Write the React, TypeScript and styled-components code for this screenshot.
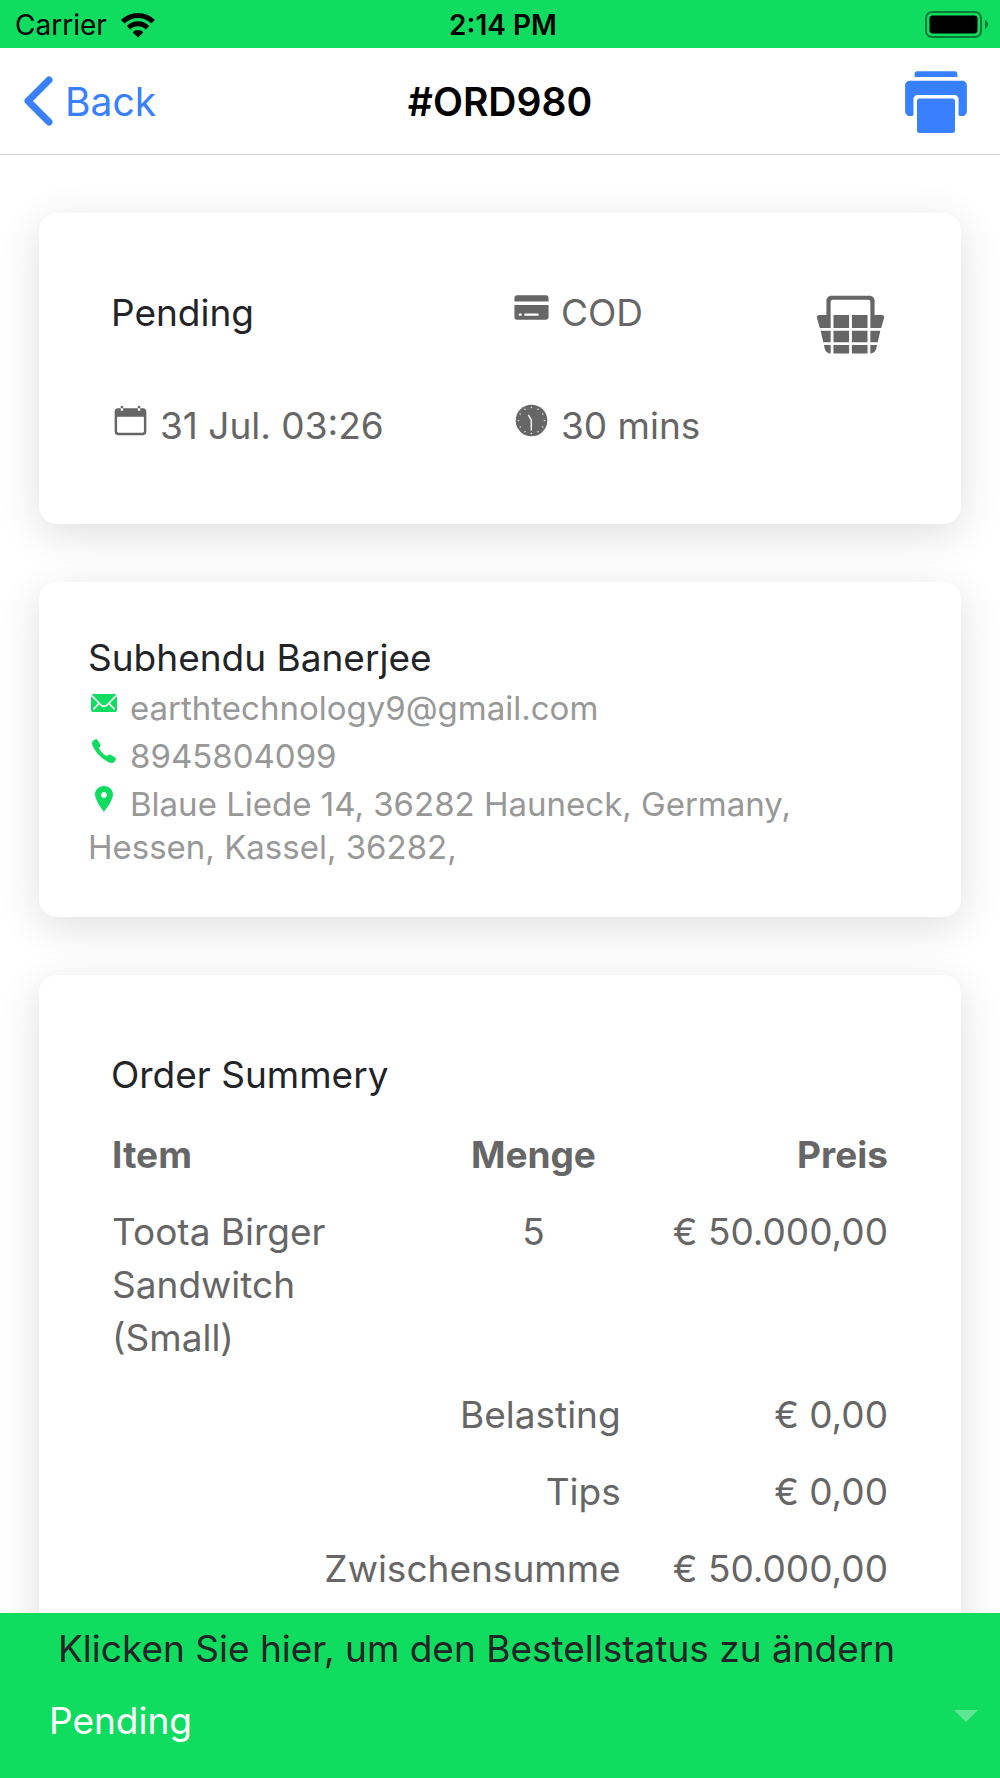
import React, { useState } from "react";
import styled, { createGlobalStyle } from "styled-components";
import {
  IoIosBasket,
  IoIosCalendar,
  IoIosCall,
  IoIosCard,
  IoIosMail,
  IoIosPin,
  IoIosPrint,
} from "react-icons/io";

const green = "#10dc60";
const blue = "#3880ff";
const ink = "#222428";
const grey = "#666666";
const muted = "#989898";

const GlobalStyle = createGlobalStyle`
  *, *::before, *::after { box-sizing: border-box; }
  body {
    margin: 0;
    background: #fff;
    color: ${grey};
    font-family: Inter, Roboto, "Liberation Sans", sans-serif;
    font-size: 37px;
    line-height: 53px;
  }
`;

const Screen = styled.div`
  display: flex;
  flex-direction: column;
  height: 100vh;
  overflow: hidden;
`;

const StatusBar = styled.div`
  flex: none;
  display: grid;
  grid-template-columns: 1fr auto 1fr;
  align-items: center;
  height: 48px;
  padding: 2px 12px 0;
  background: ${green};
  color: #000;
  font-size: 28px;
  line-height: 32px;
`;

const Carrier = styled.div`
  display: flex;
  align-items: center;
  gap: 14px;
  padding-left: 3px;
`;

const Clock = styled.time`
  padding-left: 6px;
  font-weight: 600;
`;

const Battery = styled.svg`
  justify-self: end;
`;

const Toolbar = styled.header`
  flex: none;
  display: grid;
  grid-template-columns: 1fr auto 1fr;
  align-items: center;
  height: 107px;
  padding: 0 24px;
  border-bottom: 1px solid #d4d4d4;
`;

const BackButton = styled.button`
  justify-self: start;
  display: flex;
  align-items: center;
  gap: 12px;
  padding: 0;
  border: 0;
  background: none;
  color: ${blue};
  font: inherit;
  font-size: 39px;
`;

const Title = styled.h1`
  margin: 0;
  color: #000;
  font-size: 39px;
  font-weight: 600;
`;

const PrintButton = styled.button`
  justify-self: end;
  display: flex;
  padding: 2px 2px 0 0;
  border: 0;
  background: none;
  color: ${blue};
`;

const Content = styled.main`
  flex: 1;
  min-height: 0;
  overflow: hidden;
  display: flex;
  flex-direction: column;
  gap: 58px;
  padding: 58px 39px 0;
`;

const Card = styled.section`
  flex: none;
  border-radius: 18px;
  background: #fff;
  box-shadow: 0 10px 42px rgba(0, 0, 0, 0.13);
`;

const InfoCard = styled(Card)`
  display: grid;
  grid-template-columns: 6fr 4fr 2fr;
  row-gap: 60px;
  padding: 73px 60px 72px;
`;

const InfoCell = styled.div<{ $end?: boolean }>`
  display: flex;
  justify-content: ${(p) => (p.$end ? "flex-end" : "flex-start")};
  height: 53px;
  gap: 10px;
  padding: 0 12px;
  white-space: nowrap;

  svg:not(:only-child) {
    margin-top: 2px;
  }
`;

const Strong = styled.span`
  color: ${ink};
`;

const CustomerCard = styled(Card)`
  padding: 49px 49px 48px;
`;

const CardTitle = styled.h2`
  margin: 0;
  color: ${ink};
  font-size: 37px;
  font-weight: 400;
  line-height: 53px;
`;

const ContactList = styled.div`
  margin-top: -2px;
  color: ${muted};
  font-size: 33px;
  line-height: 43px;
`;

const ContactLine = styled.p`
  margin: 0;
  padding-top: 5px;

  svg {
    height: 32px;
    margin-right: 10px;
    color: ${green};
    vertical-align: 1px;
  }
`;

const SummaryCard = styled(Card)`
  padding: 73px 60px 71px;

  h2 {
    padding: 0 12px;
  }
`;

const Items = styled.table`
  width: 100%;
  margin-top: 15px;
  border-collapse: collapse;
  table-layout: fixed;
`;

const Cell = styled.td<{ $align?: string }>`
  padding: 12px 13px;
  text-align: ${(p) => p.$align || "left"};
  vertical-align: top;
`;

const HeadCell = styled(Cell)`
  font-weight: 700;
`;

const LabelCell = styled(Cell)`
  font-weight: 400;
`;

const Column = styled.col<{ $span: number }>`
  width: calc(100% * ${(p) => p.$span} / 12);
`;

const Footer = styled.footer`
  flex: none;
  display: flex;
  flex-direction: column;
  gap: 19px;
  padding: 9px 22px 31px 49px;
  background: ${green};
`;

const StatusLabel = styled.label`
  padding-left: 9px;
  color: ${ink};
  white-space: nowrap;
`;

const SelectRow = styled.div`
  display: flex;
  align-items: flex-start;
`;

const StatusSelect = styled.select`
  flex: 1;
  height: 53px;
  padding: 0;
  border: 0;
  outline: 0;
  appearance: none;
  background: transparent;
  color: #fff;
  font: inherit;
`;

const Caret = styled.svg`
  margin-top: 16px;
`;

const totals = [
  { label: "Belasting", value: "€ 0,00" },
  { label: "Tips", value: "€ 0,00" },
  { label: "Zwischensumme", value: "€ 50.000,00" },
];

const ticks = Array.from({ length: 12 }, (_, i) => {
  const angle = (i * Math.PI) / 6;
  return { x: 19.5 + 13 * Math.sin(angle), y: 19.5 - 13 * Math.cos(angle) };
});

function DialIcon() {
  return (
    <svg width="39" height="39" viewBox="0 0 39 39" aria-hidden="true">
      <circle cx="19.5" cy="19.5" r="15.800" fill="currentColor" />
      {ticks.map((t, i) => (
        <circle key={i} cx={t.x} cy={t.y} r="0.8" fill="#fff" fillOpacity="0.8" />
      ))}
      <path
        d="M16.6 14.400L19.300 19V29"
        fill="none"
        stroke="#fff"
        strokeOpacity="0.9"
        strokeWidth="1.500"
        strokeLinecap="round"
      />
    </svg>
  );
}

export default function App() {
  const [status, setStatus] = useState("Pending");

  return (
    <Screen>
      <GlobalStyle />
      <StatusBar>
        <Carrier>
          <span>Carrier</span>
          <svg width="34" height="25" viewBox="0 0 34 25" aria-hidden="true">
            <g fill="none" stroke="#000" strokeWidth="5">
              <path d="M1.800 8.800A21.500 21.500 0 0 1 32.200 8.800" />
              <path d="M7.500 14.700A13.400 13.400 0 0 1 26.500 14.700" />
            </g>
            <path d="M17 24.500L11.600 19.200A7.600 7.600 0 0 1 22.400 19.200Z" />
          </svg>
        </Carrier>
        <Clock>2:14 PM</Clock>
        <Battery width="63" height="28" viewBox="0 0 63 28" aria-hidden="true">
          <rect x="1" y="1" width="55" height="25" rx="6" fill="none" stroke="#000" strokeOpacity="0.45" strokeWidth="2" />
          <rect x="4.5" y="4.5" width="48" height="18" rx="3" />
          <path d="M60 9Q63 10.500 63 13.500T60 18.500Z" opacity="0.45" />
        </Battery>
      </StatusBar>

      <Toolbar>
        <BackButton type="button">
          <svg width="29" height="50" viewBox="0 0 29 50" aria-hidden="true">
            <path
              d="M25 4L4 25L25 46"
              fill="none"
              stroke="currentColor"
              strokeWidth="7"
              strokeLinecap="round"
              strokeLinejoin="round"
            />
          </svg>
          Back
        </BackButton>
        <Title>#ORD980</Title>
        <PrintButton type="button" aria-label="Print">
          <IoIosPrint size={76} />
        </PrintButton>
      </Toolbar>

      <Content>
        <InfoCard>
          <InfoCell>
            <Strong>Pending</Strong>
          </InfoCell>
          <InfoCell>
            <IoIosCard size={39} />
            <span>COD</span>
          </InfoCell>
          <InfoCell $end>
            <IoIosBasket size={77} />
          </InfoCell>
          <InfoCell>
            <IoIosCalendar size={39} />
            <span>31 Jul. 03:26</span>
          </InfoCell>
          <InfoCell>
            <DialIcon />
            <span>30 mins</span>
          </InfoCell>
        </InfoCard>

        <CustomerCard>
          <CardTitle>Subhendu Banerjee</CardTitle>
          <ContactList>
            <ContactLine>
              <IoIosMail size={32} />
              earthtechnology9@gmail.com
            </ContactLine>
            <ContactLine>
              <IoIosCall size={32} />
              8945804099
            </ContactLine>
            <ContactLine>
              <IoIosPin size={32} />
              Blaue Liede 14, 36282 Hauneck, Germany, Hessen, Kassel, 36282,
            </ContactLine>
          </ContactList>
        </CustomerCard>

        <SummaryCard>
          <CardTitle>Order Summery</CardTitle>
          <Items>
            <colgroup>
              <Column $span={5} />
              <Column $span={3} />
              <Column $span={4} />
            </colgroup>
            <thead>
              <tr>
                <HeadCell as="th" scope="col">Item</HeadCell>
                <HeadCell as="th" scope="col" $align="center">Menge</HeadCell>
                <HeadCell as="th" scope="col" $align="right">Preis</HeadCell>
              </tr>
            </thead>
            <tbody>
              <tr>
                <Cell>Toota Birger Sandwitch (Small)</Cell>
                <Cell $align="center">5</Cell>
                <Cell $align="right">€ 50.000,00</Cell>
              </tr>
              {totals.map((t) => (
                <tr key={t.label}>
                  <LabelCell as="th" scope="row" colSpan={2} $align="right">
                    {t.label}
                  </LabelCell>
                  <Cell $align="right">{t.value}</Cell>
                </tr>
              ))}
            </tbody>
          </Items>
        </SummaryCard>
      </Content>

      <Footer>
        <StatusLabel htmlFor="order-status">
          Klicken Sie hier, um den Bestellstatus zu ändern
        </StatusLabel>
        <SelectRow>
          <StatusSelect
            id="order-status"
            value={status}
            onChange={(e) => setStatus(e.target.value)}
          >
            <option>Pending</option>
            <option>Accepted</option>
            <option>Delivered</option>
          </StatusSelect>
          <Caret width="24" height="12" viewBox="0 0 24 12" aria-hidden="true">
            <path d="M0 0H24L12 12Z" fill="#fff" opacity="0.33" />
          </Caret>
        </SelectRow>
      </Footer>
    </Screen>
  );
}
